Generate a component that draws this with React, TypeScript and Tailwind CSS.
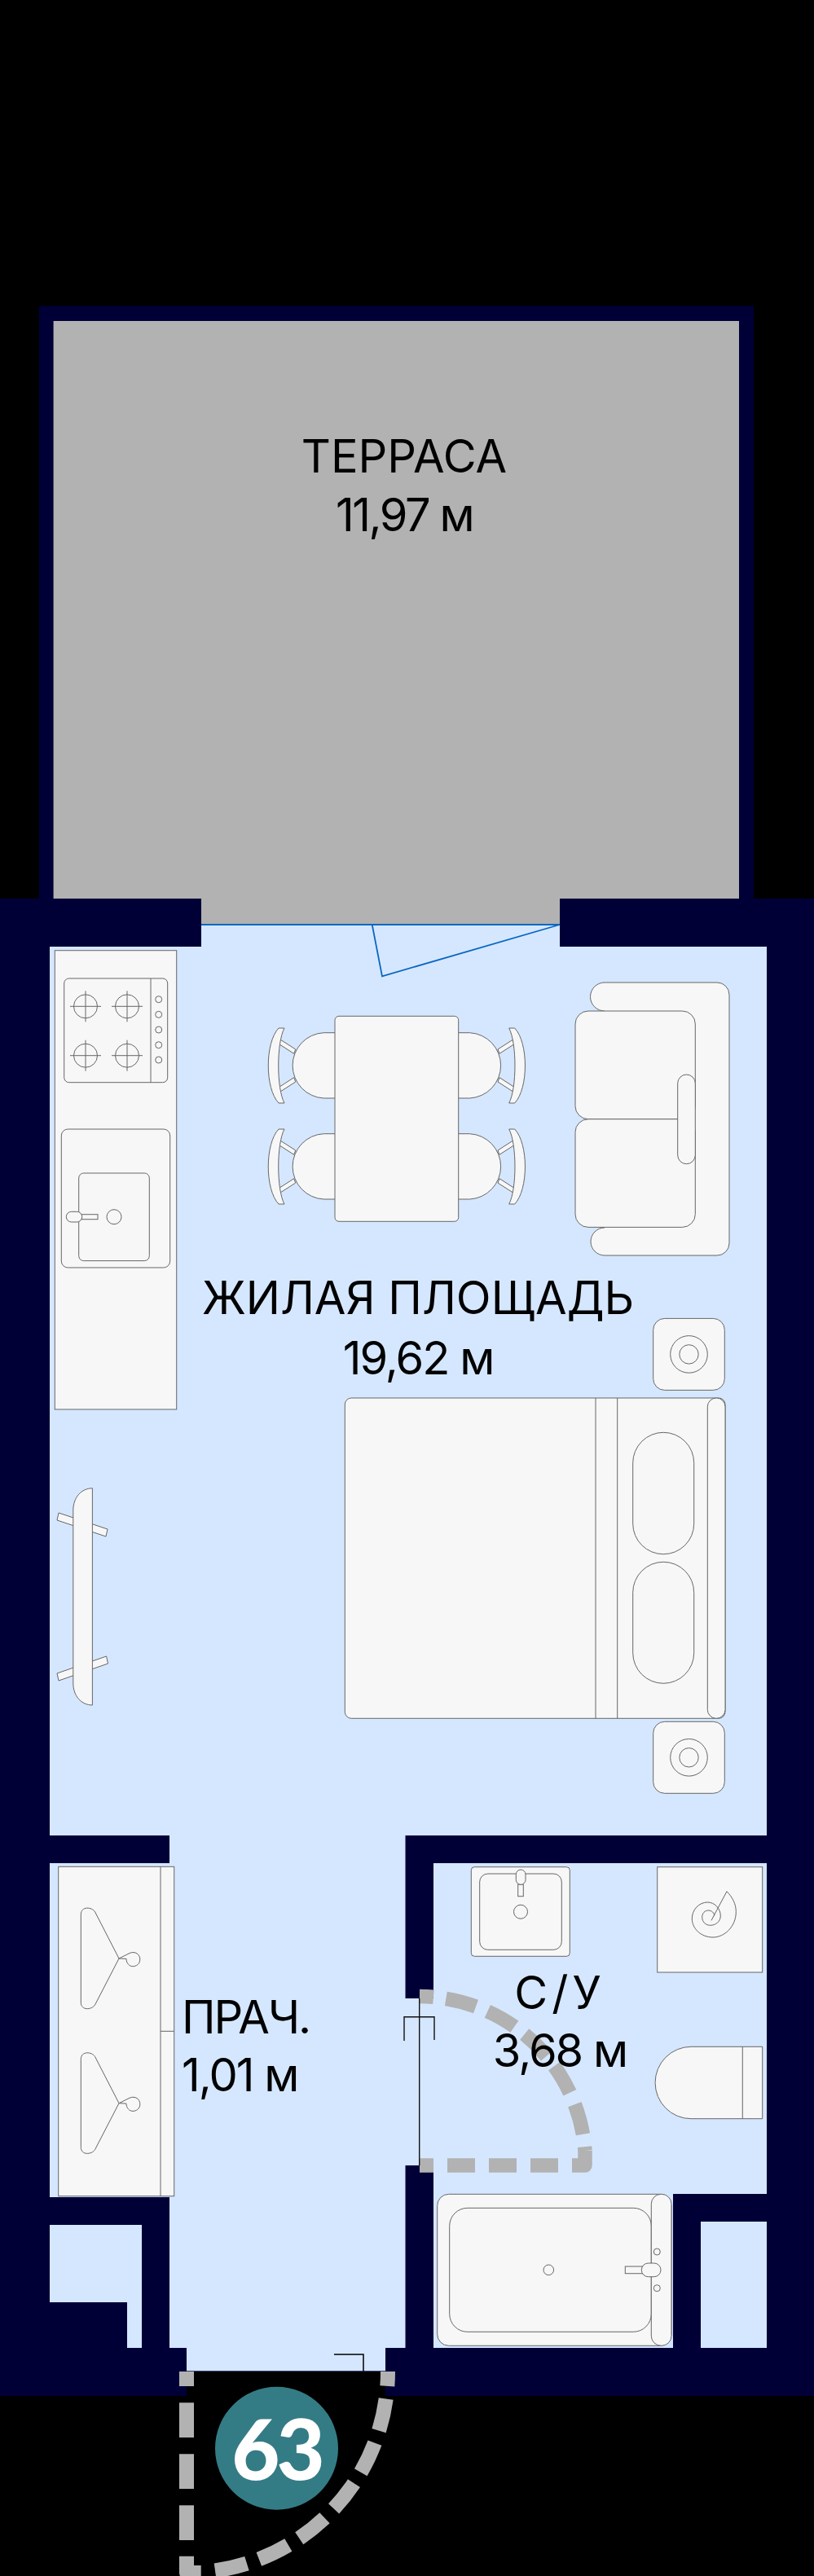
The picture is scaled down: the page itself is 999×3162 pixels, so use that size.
const WALL = "#000037";
const ROOM = "#d5e7ff";
const GREY = "#b2b2b2";

function Chair({ y }: { y: number }) {
  return (
    <g transform={`translate(0 ${y})`}>
      <path d="M344 1276 L362.7 1288 L360.7 1293.3 L342.7 1281.7 Z" />
      <path d="M344 1340 L362.7 1328 L360.7 1322.7 L342.7 1334.3 Z" />
      <path d="M349 1262 H342 C325 1280 325 1336 342 1354 H349 C339.3 1336 339.3 1280 349 1262 Z" />
      <path d="M411 1267.7 H397.3 A40.2 40.2 0 0 0 397.3 1348 H411" />
    </g>
  );
}

function Hanger({ y }: { y: number }) {
  return (
    <g transform={`translate(0 ${y})`} fill="none">
      <path d="M146 2404 L116.7 2347 C113 2340.5 99.3 2339.5 99.3 2350 V2458 C99.3 2468 112.5 2467.5 116.7 2460.7 Z" />
      <path d="M146 2404 L159 2397.5 C166 2394.5 171.8 2399 171.8 2405 C171.8 2411 167 2413.7 163 2413.7 C158.5 2413.7 155 2409.5 155 2404.4 L146 2404" />
    </g>
  );
}

function Nightstand({ y }: { y: number }) {
  return (
    <g>
      <rect x="801.7" y={y} width="87.6" height="88" rx="14" />
      <circle cx="845.5" cy={y + 44} r="22.8" />
      <circle cx="845.5" cy={y + 44} r="11.7" />
    </g>
  );
}

function Burner({ x, y }: { x: number; y: number }) {
  return (
    <g>
      <circle cx={x} cy={y} r="14.5" />
      <path d={`M${x - 19} ${y} H${x + 19} M${x} ${y - 19} V${y + 19}`} />
    </g>
  );
}

function FloorPlan() {
  return (
    <svg width="999" height="3162" viewBox="0 0 999 3162" className="block">
      {/* walls and rooms */}
      <path fill={WALL} d="M0 1103 H48 V375.5 H925 V1103 H999 V2941 H473 V2911 H229 V2941 H0 Z" />
      <path fill={GREY} d="M65.6 394 H907 V1103 H687 V1134 H247 V1103 H65.6 Z" />
      <g fill={ROOM}>
        <path d="M247 1135 H687 V1162 H941 V2253 H497.5 V2882 H473 V2910.7 H229 V2882 H208 V2253 H61 V1162 H247 Z" />
        <path d="M61 2287 H210 V2697 H61 Z" />
        <path d="M61 2731 H174 V2882 H156 V2826 H61 Z" />
        <path d="M532 2287 H941 V2693 H826 V2882 H532 Z" />
        <path d="M497 2453 H532 V2658 H497 Z" />
        <path d="M860 2727 H941 V2882 H860 Z" />
      </g>

      {/* terrace door */}
      <path d="M247 1135 H687 L469 1198.3 L456.7 1135" fill="none" stroke="#0a66c2" strokeWidth="1.8" />

      <g fill="#f7f7f7" stroke="#666666" strokeWidth="1">
        {/* kitchen */}
        <rect x="67.3" y="1166.7" width="149.4" height="563.3" />
        <rect x="78.7" y="1201" width="127" height="127.7" rx="6" />
        <path d="M185 1201 V1328.7" />
        <Burner x={105} y={1235.3} />
        <Burner x={156} y={1235.3} />
        <Burner x={105} y={1295.7} />
        <Burner x={156} y={1295.7} />
        <circle cx="194.7" cy="1226.7" r="4" />
        <circle cx="194.7" cy="1245.3" r="4" />
        <circle cx="194.7" cy="1264" r="4" />
        <circle cx="194.7" cy="1282.7" r="4" />
        <circle cx="194.7" cy="1301" r="4" />
        <rect x="75.3" y="1386" width="133.4" height="170" rx="8" />
        <rect x="96.7" y="1440" width="86.6" height="107.6" rx="6" />
        <rect x="100" y="1490.7" width="20" height="6" />
        <rect x="81.3" y="1487.3" width="19.4" height="12.7" rx="6.3" />
        <circle cx="140" cy="1493.7" r="9" />

        {/* bench */}
        <path d="M72 1857 L132 1877 L130 1886 L70 1866 Z" />
        <path d="M70 2054 L130.6 2033 L132.5 2042 L72 2063 Z" />
        <path d="M113.4 1826.8 V2093 C100 2093 89.8 2082 89.8 2066 V1854 C89.8 1838 100 1826.8 113.4 1826.8 Z" />

        {/* dining table */}
        <Chair y={0} />
        <Chair y={124} />
        <g transform="translate(973.7 0) scale(-1 1)">
          <Chair y={0} />
          <Chair y={124} />
        </g>
        <rect x="411" y="1247.3" width="151.7" height="252" rx="5" />

        {/* sofa */}
        <path d="M742 1206 H880 A15 15 0 0 1 895 1221 V1526 A15 15 0 0 1 880 1541 H742 A17 17 0 0 1 742 1507 V1241 A17.5 17.5 0 0 1 742 1206 Z" />
        <rect x="706" y="1241" width="147.3" height="132.7" rx="16" />
        <rect x="706" y="1373.7" width="147.3" height="132.7" rx="16" />
        <rect x="831.7" y="1319" width="21.6" height="109.7" rx="10.8" />

        {/* bed */}
        <Nightstand y={1618.4} />
        <Nightstand y={2113.3} />
        <rect x="423.3" y="1716" width="466.7" height="393.3" rx="8" />
        <path d="M731 1716 V2109.3 M757.7 1716 V2109.3" />
        <rect x="868.3" y="1716" width="21.7" height="393.3" rx="10.8" />
        <rect x="776.7" y="1758.3" width="75" height="149.4" rx="37.5" />
        <rect x="776.7" y="1917.3" width="75" height="149" rx="37.5" />

        {/* laundry */}
        <rect x="71.7" y="2291.3" width="142" height="404.4" />
        <path d="M197 2291.3 V2695.7 M197 2493.3 H213.7" />
        <Hanger y={0} />
        <Hanger y={177.7} />

        {/* washbasin */}
        <rect x="578.3" y="2291.7" width="121" height="109.6" rx="4" />
        <rect x="588.7" y="2300" width="100.6" height="93.3" rx="10" />
        <rect x="635.7" y="2313" width="6.6" height="14.7" />
        <rect x="633.3" y="2295" width="11.7" height="18.3" rx="5.8" />
        <circle cx="639" cy="2346.7" r="8.5" />

        {/* bidet */}
        <rect x="806.7" y="2291.7" width="129" height="129.3" />
        <path
          fill="none"
          d="M892 2321.7 C899 2329 903.3 2337 903.3 2346.7 C903.3 2365 889 2378 875 2378 C860 2378 849.3 2367 849.3 2355 C849.3 2344 858 2335 868.3 2335 C877 2335 884.3 2342.5 884.3 2351.7 C884.3 2358.5 878.5 2363.3 871.7 2363.3 C866 2363.3 861.7 2359 861.7 2353.3 C861.7 2348.5 865 2345 869.3 2345 C873.5 2345 876.7 2348 876.7 2351.7 M892 2321.7 L873 2357.3"
        />

        {/* toilet */}
        <path d="M935.7 2512.3 H848.2 A44.2 44.2 0 0 0 848.2 2600.7 H935.7 Z" />
        <path d="M911.3 2512.3 V2600.7" />

        {/* bath */}
        <rect x="536.7" y="2693.3" width="287.3" height="186" rx="14" />
        <rect x="551.7" y="2710.3" width="247.6" height="152" rx="22" />
        <rect x="799.3" y="2693.3" width="24.7" height="186" rx="12" />
        <circle cx="673.3" cy="2786.3" r="6.3" />
        <rect x="767.3" y="2782" width="22" height="8.7" />
        <rect x="787.3" y="2778" width="23.7" height="16.7" rx="8.3" />
        <circle cx="806.3" cy="2764" r="4" />
        <circle cx="806.3" cy="2808.7" r="4" />
      </g>

      {/* door swing, bathroom */}
      <g fill="none" stroke={GREY} strokeWidth="17.5" strokeLinejoin="round">
        <path d="M515 2658 H718 V2640" strokeDasharray="17 17 34 17 34 17 34 17 60" />
        <path d="M515 2450.5 A205 205 0 0 1 718 2640" strokeDasharray="17 15.5 38 15.5 38 15.5 38 15.5 38 15.5 38 15.5" />
      </g>
      <path d="M514.7 2453 V2658 M496 2505 V2475.7 H533 V2504" fill="none" stroke="#111111" strokeWidth="1.4" />

      {/* entrance */}
      <path d="M229 2910.7 H473" stroke="#22224f" strokeWidth="1" />
      <path d="M410 2890 H446 V2910.7" fill="none" stroke="#000000" strokeWidth="1.5" />
      <g fill="none" stroke={GREY} strokeWidth="18" strokeLinejoin="round">
        <path d="M229 2911 V3158 H246.7" strokeDasharray="18 20.3 42.7 20.3 42.7 20.3 42.7 19.7 60" />
        <path d="M264 3155.5 A247 247 0 0 0 476 2911" strokeDasharray="40 15.8" />
      </g>
      <circle cx="339.5" cy="3005.3" r="75.5" fill="#347c85" />
    </svg>
  );
}

export default function App() {
  return (
    <div className="relative w-[999px] h-[3162px] overflow-hidden bg-black font-['Inter',sans-serif] text-black">
      <FloorPlan />

      <div className="absolute left-[246px] top-[524px] w-[500px] whitespace-nowrap text-center text-[56px] leading-[72px]">
        <div>ТЕРРАСА</div>
        <div className="tracking-[-2.5px]">11,97 м</div>
      </div>

      <div className="absolute left-[113px] top-[1556px] w-[800px] whitespace-nowrap text-center text-[56px] leading-[74px]">
        <div>ЖИЛАЯ ПЛОЩАДЬ</div>
        <div className="tracking-[-2px]">19,62 м</div>
      </div>

      <div className="absolute left-[223px] top-[2441px] whitespace-nowrap text-[56px] leading-[71px]">
        <div className="tracking-[-2px]">ПРАЧ.</div>
        <div className="tracking-[-2px]">1,01 м</div>
      </div>

      <div className="absolute left-[487px] top-[2411px] w-[400px] whitespace-nowrap text-center text-[56px] leading-[71px]">
        <div className="tracking-[5px]">С/У</div>
        <div className="tracking-[-2px]">3,68 м</div>
      </div>

      <div className="absolute left-[264px] top-[2945px] w-[151px] text-center font-['Lato',sans-serif] text-[102px] leading-[120px] font-black tracking-[-4px] text-white">
        63
      </div>
    </div>
  );
}
